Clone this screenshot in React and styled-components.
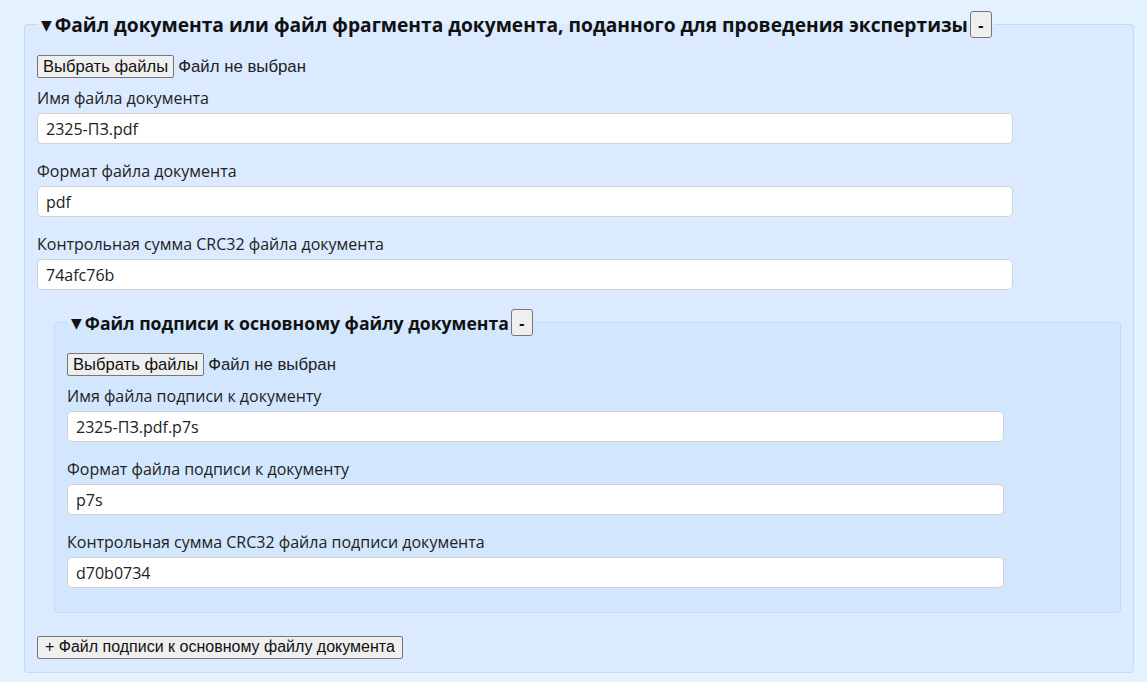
import styled, { createGlobalStyle } from 'styled-components';

const GlobalStyle = createGlobalStyle`
  html, body {
    margin: 0;
    padding: 0;
    background: #e4f1fe;
  }
  body {
    font-family: 'Open Sans', 'Noto Sans', sans-serif;
    color: #222;
  }
`;

const Page = styled.div`
  padding: 11px 13px 9px 24px;
`;

const Fieldset = styled.fieldset`
  margin: ${(props) => (props.nested ? '19px 0 0 17px' : '0')};
  padding: 0 12px ${(props) => (props.nested ? '24px' : '13px')};
  border: 1px solid #c2daf6;
  border-radius: 4px;
  background: ${(props) => (props.nested ? '#d2e7fd' : '#dbeafe')};
  min-width: 0;
`;

const Legend = styled.legend`
  padding: 0 2px;
  display: flex;
  align-items: center;
  font-weight: 700;
  font-size: ${(props) => (props.small ? '17.6px' : '19.2px')};
  color: #111;
`;

const Arrow = styled.span`
  font-family: 'DejaVu Sans', sans-serif;
  font-size: 14px;
  margin: 0 3px 0 2px;
`;

const CollapseButton = styled.button`
  width: 22px;
  height: 27px;
  padding: 0;
  margin-left: 2px;
  border: 1px solid #767676;
  border-radius: 3px;
  background: #efefef;
  font-family: 'Open Sans', sans-serif;
  font-weight: 700;
  font-size: 16px;
  color: #111;
`;

const FileRow = styled.div`
  display: flex;
  align-items: center;
  gap: 4px;
  margin-top: 17px;
  font-family: 'Liberation Sans', Arial, sans-serif;
  font-size: 16.8px;
  color: #222;
`;

const NativeButton = styled.button`
  height: 23px;
  padding: ${(props) => (props.picker ? '0 5px' : '0 7px')};
  border: 1px solid #767676;
  border-radius: 2px;
  background: #efefef;
  font-family: 'Liberation Sans', Arial, sans-serif;
  font-size: ${(props) => (props.picker ? '16.6px' : '16px')};
  color: #111;
`;

const Field = styled.div`
  margin-top: ${(props) => (props.first ? '9px' : '16px')};
`;

const Label = styled.label`
  display: block;
  font-size: 16px;
  line-height: 22px;
  margin-bottom: 4px;
  color: #222;
`;

const TextInput = styled.input.attrs(() => ({ type: 'text' }))`
  box-sizing: border-box;
  width: 90%;
  height: 31px;
  padding: 0 8px;
  border: 1px solid #d2d2d2;
  border-radius: 5px;
  background: #fff;
  font-family: 'Open Sans', sans-serif;
  font-size: 16px;
  color: #222;
  outline: none;
`;

const AddRow = styled.div`
  margin-top: 22px;
`;

function FilePicker() {
  return (
    <FileRow>
      <NativeButton picker type="button">Выбрать файлы</NativeButton>
      <span>Файл не выбран</span>
    </FileRow>
  );
}

function TextField({ label, value, first }) {
  return (
    <Field first={first}>
      <Label>{label}</Label>
      <TextInput defaultValue={value} />
    </Field>
  );
}

export default function App() {
  return (
    <Page>
      <GlobalStyle />
      <Fieldset>
        <Legend>
          <Arrow>▼</Arrow>
          Файл документа или файл фрагмента документа, поданного для проведения экспертизы
          <CollapseButton type="button">-</CollapseButton>
        </Legend>
        <FilePicker />
        <TextField first label="Имя файла документа" value="2325-ПЗ.pdf" />
        <TextField label="Формат файла документа" value="pdf" />
        <TextField label="Контрольная сумма CRC32 файла документа" value="74afc76b" />

        <Fieldset nested>
          <Legend small>
            <Arrow>▼</Arrow>
            Файл подписи к основному файлу документа
            <CollapseButton type="button">-</CollapseButton>
          </Legend>
          <FilePicker />
          <TextField first label="Имя файла подписи к документу" value="2325-ПЗ.pdf.p7s" />
          <TextField label="Формат файла подписи к документу" value="p7s" />
          <TextField label="Контрольная сумма CRC32 файла подписи документа" value="d70b0734" />
        </Fieldset>

        <AddRow>
          <NativeButton type="button">+ Файл подписи к основному файлу документа</NativeButton>
        </AddRow>
      </Fieldset>
    </Page>
  );
}
